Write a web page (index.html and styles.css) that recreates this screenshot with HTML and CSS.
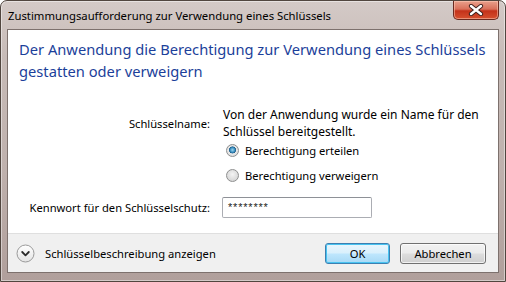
FILE: index.html
```html
<!DOCTYPE html>
<html lang="de">
<head>
<meta charset="utf-8">
<link rel="stylesheet" href="styles.css">
</head>
<body>
<div class="window">
  <div class="titlebar">
    <span class="title">Zustimmungsaufforderung zur Verwendung eines Schlüssels</span>
    <div class="close">
      <svg width="16" height="12" viewBox="0 0 16 12">
        <path d="M3 2 L13 10 M13 2 L3 10" stroke="#3a1d1a" stroke-width="4.2" stroke-linecap="round"/>
        <path d="M3 2 L13 10 M13 2 L3 10" stroke="#ffffff" stroke-width="2.4" stroke-linecap="round"/>
      </svg>
    </div>
  </div>
  <div class="client">
    <div class="main">
      <h1 class="instruction">Der Anwendung die Berechtigung zur Verwendung eines Schlüssels<br>gestatten oder verweigern</h1>
      <div class="form">
        <div class="label">Schlüsselname:</div>
        <div class="desc">Von der Anwendung wurde ein Name für den<br>Schlüssel bereitgestellt.</div>
        <div class="spacer"></div>
        <div class="radios">
          <div class="radio-row"><span class="radio checked"></span><span>Berechtigung erteilen</span></div>
          <div class="radio-row"><span class="radio"></span><span>Berechtigung verweigern</span></div>
        </div>
        <div class="label pw-label">Kennwort für den Schlüsselschutz:</div>
        <div class="input">********</div>
      </div>
    </div>
    <div class="footer">
      <div class="expander">
        <span class="chev">
          <svg width="19" height="19" viewBox="0 0 19 19">
            <defs>
              <linearGradient id="cg" x1="0" y1="0" x2="0" y2="1">
                <stop offset="0" stop-color="#ffffff"/>
                <stop offset="1" stop-color="#e4e4e4"/>
              </linearGradient>
            </defs>
            <circle cx="9.5" cy="9.5" r="8.5" fill="url(#cg)" stroke="#9a9a9a" stroke-width="1"/>
            <path d="M6.2 8 L9.5 11.3 L12.8 8" fill="none" stroke="#2b2b2b" stroke-width="1.8" stroke-linecap="round" stroke-linejoin="round"/>
          </svg>
        </span>
        <span>Schlüsselbeschreibung anzeigen</span>
      </div>
      <div class="buttons">
        <div class="btn default">OK</div>
        <div class="btn cancel">Abbrechen</div>
      </div>
    </div>
  </div>
</div>
</body>
</html>
```
FILE: styles.css
```css
html, body {
  margin: 0;
  padding: 0;
  background: #ffffff;
}

body {
  font-family: "Noto Sans", "Open Sans", sans-serif;
  font-size: 11.2px;
  color: #000000;
}

.window {
  width: 506px;
  height: 282px;
  box-sizing: border-box;
  border: 1px solid #51463f;
  border-radius: 7px 7px 0 0;
  background: linear-gradient(180deg, #d4cac7 0%, #c7bbb7 20%, #bfb1ad 60%, #b09f9b 100%);
  display: flex;
  flex-direction: column;
  box-shadow: inset 0 0 0 1px rgba(255,255,255,0.45);
}

.titlebar {
  height: 28px;
  display: flex;
  justify-content: space-between;
  align-items: flex-start;
}

.title {
  padding-left: 7px;
  padding-top: 1px;
  line-height: 28px;
  font-size: 11.3px;
  color: #000;
}

.close {
  width: 46px;
  height: 19px;
  margin-right: 6px;
  box-sizing: border-box;
  border: 1px solid #6b2a20;
  border-top: none;
  border-radius: 0 0 5px 5px;
  background: linear-gradient(180deg, #e9a08c 0%, #d9705a 45%, #c4321a 55%, #d6502f 100%);
  display: flex;
  align-items: center;
  justify-content: center;
  box-shadow: inset 0 0 0 1px rgba(255,210,190,0.5);
}

.close svg {
  display: block;
}

.client {
  flex: 1;
  margin: 0 6px 8px 6px;
  border: 1px solid #7d716d;
  display: flex;
  flex-direction: column;
  background: #ffffff;
}

.main {
  flex: 1;
  background: #ffffff;
  padding: 8px 0 0 11px;
}

.instruction {
  margin: 0;
  font-weight: normal;
  font-size: 14.7px;
  line-height: 22px;
  color: #1c3f9a;
}

.form {
  margin-top: 24px;
  display: grid;
  grid-template-columns: 191px 1fr;
  column-gap: 13px;
  align-items: center;
}

.label {
  text-align: right;
  white-space: nowrap;
}

.desc {
  font-size: 12px;
  line-height: 17px;
}

.radios {
  display: flex;
  flex-direction: column;
  gap: 5px;
}

.radio-row {
  height: 20px;
  display: flex;
  align-items: center;
  gap: 6px;
  padding-left: 3px;
}

.radio {
  width: 13px;
  height: 13px;
  box-sizing: border-box;
  border-radius: 50%;
  border: 1px solid #8e8f8f;
  background: radial-gradient(circle at 50% 40%, #f4f4f4 0%, #dcdcdc 60%, #cfcfcf 100%);
  flex: none;
}

.radio.checked {
  background: radial-gradient(circle at 50% 45%, #9fd6f0 0%, #3b8fc0 28%, #1e5f8c 40%, #e9e9e9 46%, #d6d6d6 100%);
}

.pw-label {
  margin-top: 12px;
}

.input {
  margin-top: 12px;
  width: 150px;
  height: 21px;
  box-sizing: border-box;
  border: 1px solid #abadb3;
  border-top-color: #8e9197;
  border-radius: 2px;
  padding-left: 5px;
  font-family: "Liberation Sans", Arial, sans-serif;
  font-size: 11px;
  letter-spacing: 0.8px;
  line-height: 19px;
  color: #222;
  margin-left: -1px;
}

.footer {
  height: 38px;
  border-top: 1px solid #dfdfdf;
  background: #f0f0f0;
  display: flex;
  justify-content: space-between;
  align-items: flex-start;
  padding: 0 12px 0 8px;
}

.expander {
  display: flex;
  align-items: center;
  gap: 10px;
  height: 38px;
}

.chev svg {
  display: block;
}

.buttons {
  display: flex;
  gap: 10px;
  padding-top: 9px;
}

.btn {
  height: 21px;
  box-sizing: border-box;
  border: 1px solid #707070;
  border-radius: 3px;
  background: linear-gradient(180deg, #f2f2f2 0%, #ebebeb 48%, #dddddd 52%, #cfcfcf 100%);
  display: flex;
  align-items: center;
  justify-content: center;
  box-shadow: inset 0 0 0 1px rgba(255,255,255,0.7);
}

.btn.default {
  width: 65px;
  border-color: #3c7fb1;
  background: linear-gradient(180deg, #eaf6fd 0%, #d9f0fc 48%, #bee6fd 52%, #a7d9f5 100%);
  box-shadow: inset 0 0 0 1px #48c3f0;
}

.btn.cancel {
  width: 86px;
}
```
